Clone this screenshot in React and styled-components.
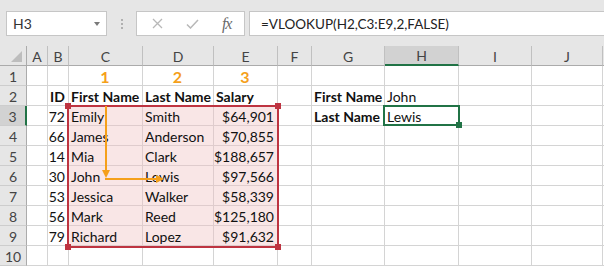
import React from 'react';
import styled, { createGlobalStyle, css } from 'styled-components';

const GlobalStyle = createGlobalStyle`
  html, body {
    margin: 0;
    padding: 0;
    background: #fff;
  }
  body {
    font-family: Lato, "Liberation Sans", sans-serif;
    overflow: hidden;
  }
`;

const COLS = [
  { key: 'A', width: 21 },
  { key: 'B', width: 21 },
  { key: 'C', width: 74 },
  { key: 'D', width: 71 },
  { key: 'E', width: 64 },
  { key: 'F', width: 34 },
  { key: 'G', width: 73 },
  { key: 'H', width: 74 },
  { key: 'I', width: 73 },
  { key: 'J', width: 71 },
];

const GRID_TEMPLATE = `27px ${COLS.map((c) => `${c.width}px`).join(' ')} 1fr`;

const Window = styled.div`
  width: 604px;
  height: 267px;
  overflow: hidden;
  background: #fff;
`;

// formula bar
const FormulaBar = styled.div`
  height: 46px;
  box-sizing: border-box;
  background: #e6e6e6;
  display: flex;
  align-items: flex-start;
  padding: 11px 0 0 6px;
`;

const NameBox = styled.div`
  width: 101px;
  height: 25px;
  box-sizing: border-box;
  background: #fff;
  border: 1px solid #c6c6c6;
  display: flex;
  align-items: center;
  justify-content: space-between;
  padding: 0 6px 0 6px;
  font-size: 14px;
  color: #333;
`;

const DropArrow = styled.span`
  width: 0;
  height: 0;
  border-left: 3px solid transparent;
  border-right: 3px solid transparent;
  border-top: 4px solid #7a7a7a;
`;

const Grip = styled.div`
  margin: 8px 13px 0 14px;
  display: flex;
  flex-direction: column;
  gap: 2px;
`;

const GripDot = styled.span`
  width: 2px;
  height: 2px;
  background: #b0b0b0;
`;

const ActionBox = styled.div`
  width: 109px;
  height: 25px;
  box-sizing: border-box;
  background: #fff;
  border: 1px solid #c6c6c6;
  display: flex;
  align-items: center;
  padding-left: 3px;
`;

const ActionSlot = styled.span`
  width: 35px;
  display: flex;
  justify-content: center;
  align-items: center;
`;

const Fx = styled.span`
  font-family: "Liberation Serif", serif;
  font-style: italic;
  font-size: 16px;
  color: #6a6a6a;
  letter-spacing: -1px;
  line-height: 1;
`;

const FormulaInput = styled.div`
  flex: 1;
  height: 25px;
  margin-left: 4px;
  box-sizing: border-box;
  background: #fff;
  border: 1px solid #c6c6c6;
  border-right: none;
  display: flex;
  align-items: center;
  padding-left: 11px;
  font-size: 13.5px;
  color: #222;
  white-space: nowrap;
`;

// sheet
const Sheet = styled.div`
  position: relative;
  display: grid;
  grid-template-columns: ${GRID_TEMPLATE};
  grid-auto-rows: 20px;
`;

const headerBase = css`
  box-sizing: border-box;
  background: #e6e6e6;
  color: #444;
  font-size: 14px;
  display: flex;
  align-items: flex-end;
  justify-content: center;
  line-height: 17px;
`;

const Corner = styled.div`
  ${headerBase};
  border-right: 1px solid #ababab;
  border-bottom: 1px solid #ababab;
  justify-content: flex-end;
  padding: 0 4px 3px 0;
`;

const SelectAll = styled.span`
  width: 11px;
  height: 11px;
  background: #bdbdbd;
  clip-path: polygon(100% 0, 100% 100%, 0 100%);
`;

const ColHeader = styled.div`
  ${headerBase};
  border-right: 1px solid #c0c0c0;
  border-bottom: 1px solid #ababab;
  ${(p) =>
    p.$active &&
    css`
      background: #d2d2d2;
      border-bottom: 2px solid #217346;
    `}
`;

const RowHeader = styled.div`
  ${headerBase};
  border-right: 1px solid #ababab;
  border-bottom: 1px solid #cdcdcd;
  ${(p) =>
    p.$active &&
    css`
      background: #d2d2d2;
      border-right: 2px solid #217346;
    `}
`;

const Cell = styled.div`
  position: relative;
  box-sizing: border-box;
  border-right: 1px solid #d4d4d4;
  border-bottom: 1px solid #d4d4d4;
  display: flex;
  align-items: flex-end;
  justify-content: ${(p) => (p.$align === 'right' ? 'flex-end' : p.$align === 'center' ? 'center' : 'flex-start')};
  padding: 0 3px 0 2px;
  font-size: ${(p) => (p.$orange ? '16px' : '14px')};
  line-height: 17px;
  white-space: nowrap;
  color: ${(p) => (p.$orange ? '#f5a01a' : '#111')};
  font-weight: ${(p) => (p.$bold ? 700 : 400)};
  ${(p) =>
    p.$fill &&
    css`
      background: #f9e6e6;
      border-color: #dfcccd;
    `}
  ${(p) =>
    p.$active &&
    css`
      &::after {
        content: '';
        position: absolute;
        left: -2px;
        top: -1px;
        right: -2px;
        bottom: -1px;
        border: 2px solid #217346;
        z-index: 2;
      }
      &::before {
        content: '';
        position: absolute;
        right: -4px;
        bottom: -3px;
        width: 6px;
        height: 6px;
        background: #217346;
        z-index: 3;
      }
    `}
`;

// lookup range overlay
const RangeBox = styled.div`
  position: absolute;
  left: 67px;
  top: 59px;
  width: 212px;
  height: 143px;
  box-sizing: border-box;
  border: 2px solid #be3441;
  pointer-events: none;
  z-index: 2;
`;

const Handle = styled.span`
  position: absolute;
  width: 6px;
  height: 6px;
  background: #be3441;
  ${(p) => (p.$top ? 'top: -4px;' : 'bottom: -4px;')}
  ${(p) => (p.$left ? 'left: -4px;' : 'right: -4px;')}
`;

const ArrowLayer = styled.svg`
  position: absolute;
  left: 0;
  top: 0;
  pointer-events: none;
  z-index: 3;
`;

const people = [
  [72, 'Emily', 'Smith', '$64,901'],
  [66, 'James', 'Anderson', '$70,855'],
  [14, 'Mia', 'Clark', '$188,657'],
  [30, 'John', 'Lewis', '$97,566'],
  [53, 'Jessica', 'Walker', '$58,339'],
  [56, 'Mark', 'Reed', '$125,180'],
  [79, 'Richard', 'Lopez', '$91,632'],
];

const bold = (v) => ({ v, bold: true });
const text = (v) => ({ v });

const rows = [
  {
    C: { v: '1', orange: true, bold: true, align: 'center' },
    D: { v: '2', orange: true, bold: true, align: 'center' },
    E: { v: '3', orange: true, bold: true, align: 'center' },
  },
  { B: bold('ID'), C: bold('First Name'), D: bold('Last Name'), E: bold('Salary'), G: bold('First Name'), H: text('John') },
  ...people.map(([id, first, last, salary], i) => ({
    B: { v: id, align: 'right' },
    C: { v: first, fill: true },
    D: { v: last, fill: true },
    E: { v: salary, align: 'right', fill: true },
    ...(i === 0 ? { G: bold('Last Name'), H: { v: 'Lewis', active: true } } : {}),
  })),
  {},
];

const ACTIVE_ROW = 3;
const ACTIVE_COL = 'H';

export default function App() {
  return (
    <Window>
      <GlobalStyle />
      <FormulaBar>
        <NameBox>
          <span>H3</span>
          <DropArrow />
        </NameBox>
        <Grip>
          <GripDot />
          <GripDot />
          <GripDot />
        </Grip>
        <ActionBox>
          <ActionSlot>
            <svg width="11" height="11" viewBox="0 0 11 11">
              <path d="M1 1 L10 10 M10 1 L1 10" stroke="#b8b8b8" strokeWidth="1.3" fill="none" />
            </svg>
          </ActionSlot>
          <ActionSlot>
            <svg width="13" height="10" viewBox="0 0 13 10">
              <path d="M1 5.5 L4.5 9 L12 1" stroke="#b8b8b8" strokeWidth="1.5" fill="none" />
            </svg>
          </ActionSlot>
          <ActionSlot>
            <Fx>fx</Fx>
          </ActionSlot>
        </ActionBox>
        <FormulaInput>=VLOOKUP(H2,C3:E9,2,FALSE)</FormulaInput>
      </FormulaBar>

      <Sheet>
        <Corner>
          <SelectAll />
        </Corner>
        {COLS.map((c) => (
          <ColHeader key={c.key} $active={c.key === ACTIVE_COL}>
            {c.key}
          </ColHeader>
        ))}
        <ColHeader />

        {rows.map((row, r) => (
          <React.Fragment key={r}>
            <RowHeader $active={r + 1 === ACTIVE_ROW}>{r + 1}</RowHeader>
            {COLS.map((c) => {
              const cell = row[c.key] || {};
              return (
                <Cell
                  key={c.key}
                  $bold={cell.bold}
                  $align={cell.align}
                  $orange={cell.orange}
                  $fill={cell.fill}
                  $active={cell.active}
                >
                  {cell.v}
                </Cell>
              );
            })}
            <Cell />
          </React.Fragment>
        ))}

        <RangeBox>
          <Handle $top $left />
          <Handle $top />
          <Handle $left />
          <Handle />
        </RangeBox>

        <ArrowLayer width="604" height="221" viewBox="0 0 604 221">
          <line x1="106" y1="60" x2="106" y2="125" stroke="#f5a01a" strokeWidth="2" />
          <polygon points="102,124 110,124 106,132" fill="#f5a01a" />
          <line x1="105" y1="133" x2="157" y2="133" stroke="#f5a01a" strokeWidth="2" />
          <polygon points="156,129 156,137 164,133" fill="#f5a01a" />
        </ArrowLayer>
      </Sheet>
    </Window>
  );
}
